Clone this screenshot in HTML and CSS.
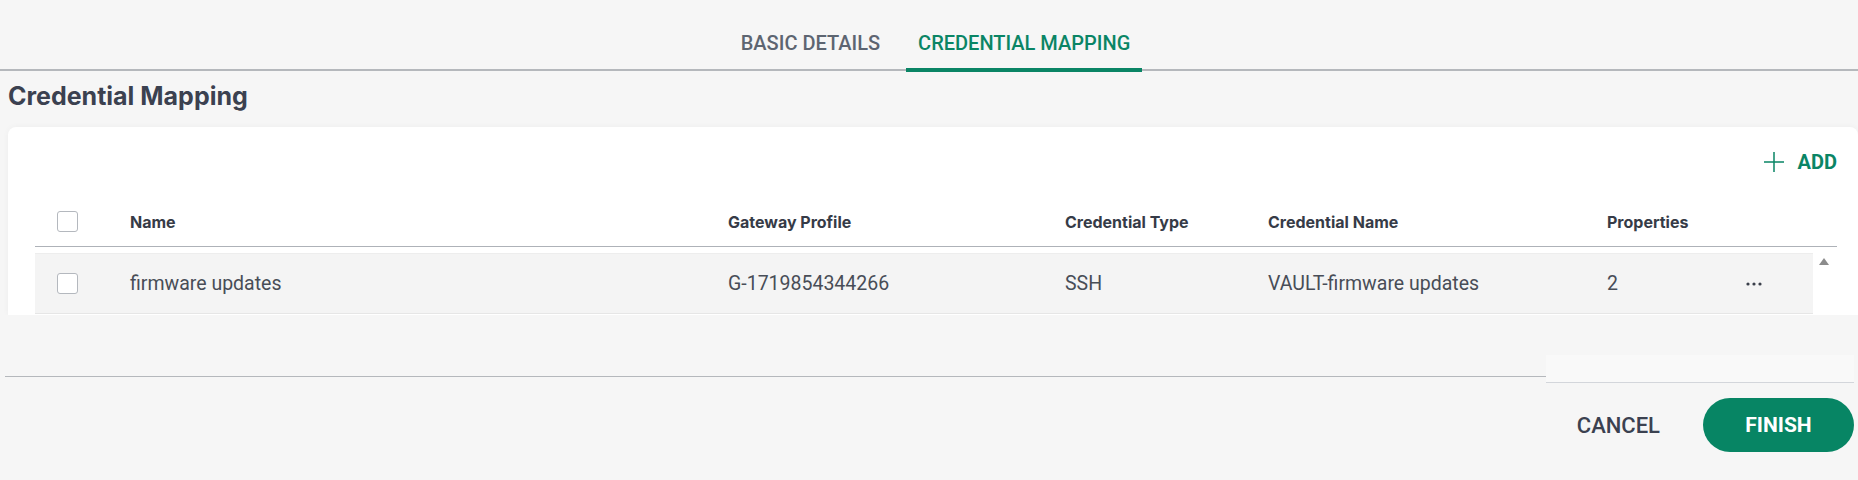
FILE: index.html
```html
<!DOCTYPE html>
<html lang="en">
<head>
	<meta charset="UTF-8">
	<title>Credential Mapping</title>
	<link rel="stylesheet" href="styles.css">
</head>
<body>
	<div class="tabs">
		<a class="tab" href="javascript:void(0)">BASIC DETAILS</a>
		<a class="tab active" href="javascript:void(0)">CREDENTIAL MAPPING</a>
	</div>
	<h2 class="title">Credential Mapping</h2>
	<div class="card">
		<div class="toolbar">
			<a class="add_btn" href="javascript:void(0)">
				<svg width="20" height="20" viewBox="0 0 20 20"><path d="M10 0v20M0 10h20" stroke="#0a8565" stroke-width="1.5" fill="none"/></svg>
				<span>ADD</span>
			</a>
		</div>
		<div class="grid head">
			<span class="checkbox"></span>
			<span>Name</span>
			<span>Gateway Profile</span>
			<span>Credential Type</span>
			<span>Credential Name</span>
			<span>Properties</span>
			<span></span>
		</div>
		<div class="body">
			<div class="rows">
				<div class="grid row">
					<span class="checkbox"></span>
					<span>firmware updates</span>
					<span>G-1719854344266</span>
					<span>SSH</span>
					<span>VAULT-firmware updates</span>
					<span>2</span>
					<span class="more"><svg width="16" height="4" viewBox="0 0 16 4"><circle cx="2" cy="2" r="1.6"/><circle cx="8" cy="2" r="1.6"/><circle cx="14" cy="2" r="1.6"/></svg></span>
				</div>
			</div>
			<div class="scrollbar"><span class="arrow_up"></span></div>
		</div>
	</div>
	<div class="footer">
		<div class="footer_top">
			<div class="rule"></div>
			<div class="ghost"></div>
		</div>
		<div class="actions">
			<a class="cancel_btn" href="javascript:void(0)">CANCEL</a>
			<a class="finish_btn" href="javascript:void(0)">FINISH</a>
		</div>
	</div>
</body>
</html>
```
FILE: styles.css
```css
html,body{margin: 0; padding: 0; background: #f6f6f6;}
body{font-family: Roboto, "Liberation Sans", sans-serif; color: #3b4150;}
a{text-decoration: none;}

.tabs{display: flex; justify-content: center; align-items: flex-start; gap: 14px; height: 69px; border-bottom: 2px solid #b5b8bc; padding-left: 13px;}
.tab{box-sizing: border-box; height: 69px; padding: 32px 12px 0; line-height: 22px; font-size: 20px; font-weight: 500; color: #5d6571;}
.tab.active{height: 72px; color: #0a8565; border-bottom: 4px solid #0a8565;}

.title{margin: 10px 0 16px 8px; font-family: Inter, Roboto, sans-serif; font-size: 25px; line-height: 30px; font-weight: 700; color: #3b4150;}

.card{margin-left: 8px; padding: 0 21px 1px 27px; background: #fff; border-radius: 8px 8px 0 0; box-shadow: 0 0 6px rgba(0,0,0,0.04);}
.toolbar{display: flex; justify-content: flex-end; align-items: center; height: 70px;}
.add_btn{display: flex; align-items: center; gap: 14px; color: #0a8565; font-size: 20px; font-weight: 700;}
.add_btn svg{display: block;}

.grid{display: grid; grid-template-columns: 95px 598px 337px 203px 339px 139px 1fr; align-items: center;}
.head{height: 49px; border-bottom: 1px solid #aeb2b8; font-family: Inter, Roboto, sans-serif; font-size: 16px; font-weight: 700; color: #363b47;}
.checkbox{display: block; box-sizing: border-box; width: 21px; height: 21px; margin-left: 22px; border: 1px solid #b4b8be; border-radius: 3px; background: #fff;}

.body{display: flex; margin-top: 6px;}
.rows{flex: 1;}
.row{box-sizing: border-box; height: 61px; background: #f4f4f4; border-top: 1px solid #ededed; border-bottom: 1px solid #e6e6e6; font-size: 19.5px; color: #484d57;}
.more{display: flex;}
.more svg{fill: #3a3f4a;}
.scrollbar{width: 24px;}
.arrow_up{display: block; width: 0; height: 0; margin: 5px 0 0 6px; border-left: 5px solid transparent; border-right: 5px solid transparent; border-bottom: 7px solid #8c8c8c;}

.footer{margin-left: 5px; height: 165px; padding-top: 40px; box-sizing: border-box; background: #f6f6f6;}
.footer_top{display: flex; align-items: flex-start;}
.rule{flex: 1; height: 21px; border-bottom: 1px solid #b5b8bc;}
.ghost{width: 308px; height: 27px; margin-right: 4px; background: #f9f9f9; border-bottom: 1px solid #d3d6db;}
.actions{display: flex; justify-content: flex-end; align-items: center; margin-top: 15px; padding-right: 4px;}
.cancel_btn{margin-right: 43px; font-size: 22px; font-weight: 500; color: #3b4150;}
.finish_btn{display: flex; justify-content: center; align-items: center; width: 151px; height: 54px; border-radius: 27px; background: #078564; color: #fff; font-size: 21px; font-weight: 700;}
```
